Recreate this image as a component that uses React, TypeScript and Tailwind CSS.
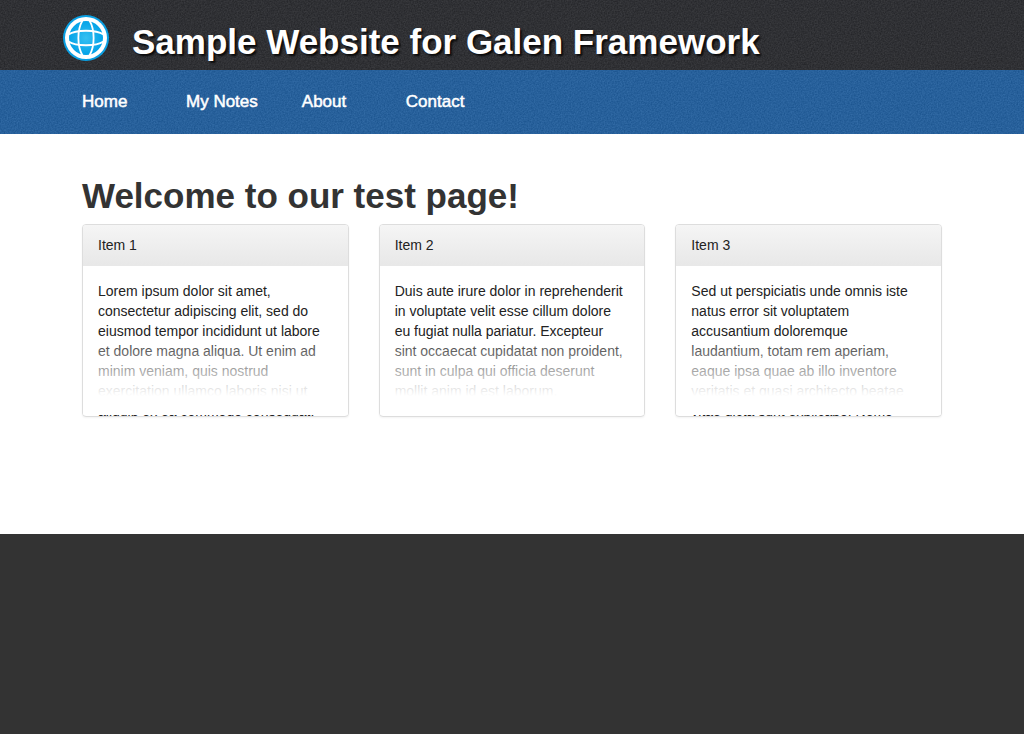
type Item = { title: string; lines: string[] };

const navLinks = ["Home", "My Notes", "About", "Contact"];

const items: Item[] = [
  {
    title: "Item 1",
    lines: [
      "Lorem ipsum dolor sit amet,",
      "consectetur adipiscing elit, sed do",
      "eiusmod tempor incididunt ut labore",
      "et dolore magna aliqua. Ut enim ad",
      "minim veniam, quis nostrud",
      "exercitation ullamco laboris nisi ut",
      "aliquip ex ea commodo consequat.",
    ],
  },
  {
    title: "Item 2",
    lines: [
      "Duis aute irure dolor in reprehenderit",
      "in voluptate velit esse cillum dolore",
      "eu fugiat nulla pariatur. Excepteur",
      "sint occaecat cupidatat non proident,",
      "sunt in culpa qui officia deserunt",
      "mollit anim id est laborum.",
    ],
  },
  {
    title: "Item 3",
    lines: [
      "Sed ut perspiciatis unde omnis iste",
      "natus error sit voluptatem",
      "accusantium doloremque",
      "laudantium, totam rem aperiam,",
      "eaque ipsa quae ab illo inventore",
      "veritatis et quasi architecto beatae",
      "vitae dicta sunt explicabo. Nemo",
    ],
  },
];

// Fine noise laid over a bar's flat colour.
function Grain({ id }: { id: string }) {
  return (
    <svg className="absolute inset-0 h-full w-full opacity-8" aria-hidden="true">
      <filter id={id} x="0" y="0" width="100%" height="100%" colorInterpolationFilters="sRGB">
        <feTurbulence type="fractalNoise" baseFrequency="0.7" numOctaves="2" />
        <feColorMatrix values="1.6 0 0 0 -0.3  1.6 0 0 0 -0.3  1.6 0 0 0 -0.3  0 0 0 0 1" />
      </filter>
      <rect width="100%" height="100%" filter={`url(#${id})`} />
    </svg>
  );
}

function Logo() {
  return (
    <svg className="size-12 shrink-0" viewBox="0 0 48 48" aria-hidden="true">
      <defs>
        <radialGradient id="globe" cx="0.5" cy="0.5" r="0.5">
          <stop offset="0" stopColor="#35c0f2" />
          <stop offset="1" stopColor="#04a3e8" />
        </radialGradient>
      </defs>
      <circle cx="24" cy="24" r="23" fill="#0a9fe2" />
      <circle cx="24" cy="24" r="21" fill="#fff" />
      <circle cx="24" cy="24" r="17" fill="url(#globe)" />
      <g fill="none" stroke="#fff" strokeWidth="1.8">
        <path d="M20.500 6.500C15 16 15 32 20.500 41.500" />
        <path d="M27.500 6.500C33 16 33 32 27.500 41.500" />
        <path d="M6.500 20.500C14 15.500 34 15.500 41.500 20.500" />
        <path d="M6.500 27.500C14 32.500 34 32.500 41.500 27.500" />
      </g>
    </svg>
  );
}

function Card({ title, lines }: Item) {
  return (
    <article className="relative h-[193px] overflow-hidden rounded border border-[#ddd] bg-white text-sm leading-5 text-[#222] shadow-xs">
      <h2 className="border-b border-[#e8e8e8] bg-linear-to-b from-[#f5f5f5] to-[#e8e8e8] px-[15px] py-[10px]">{title}</h2>
      <p className="p-[15px] whitespace-pre-line">{lines.join("\n")}</p>
      <div className="absolute inset-x-0 bottom-px h-[76px] bg-linear-to-b from-white/10 to-white to-75%" />
    </article>
  );
}

export default function App() {
  return (
    <div className="min-h-screen bg-[#333] font-['Liberation_Sans',Arial,sans-serif]">
      <header>
        <div className="relative bg-[#292a2e] px-4">
          <Grain id="grain-dark" />
          <div className="relative mx-auto flex h-[70px] max-w-[900px] items-center gap-[22px] pt-[6px]">
            <Logo />
            <p className="pt-2 text-[35px] leading-[40px] font-bold text-white [text-shadow:2px_2px_2px_#000c]">
              Sample Website for Galen Framework
            </p>
          </div>
        </div>
        <nav className="relative bg-[#205e9e] px-4">
          <Grain id="grain-blue" />
          <ul className="relative mx-auto flex h-16 max-w-[860px] items-center text-[17px] text-white [-webkit-text-stroke:0.5px_#fff]">
            {navLinks.map((label) => (
              <li key={label} className="min-w-[104px] pr-[44px]">
                <a href="#">{label}</a>
              </li>
            ))}
          </ul>
        </nav>
      </header>
      <main className="min-h-[400px] bg-white px-4 pt-[42px]">
        <div className="mx-auto max-w-[860px]">
          <h1 className="text-[35px] leading-[40px] font-bold text-[#333]">Welcome to our test page!</h1>
          <div className="mt-2 grid grid-cols-3 gap-[30px]">
            {items.map((item) => (
              <Card key={item.title} {...item} />
            ))}
          </div>
        </div>
      </main>
    </div>
  );
}
